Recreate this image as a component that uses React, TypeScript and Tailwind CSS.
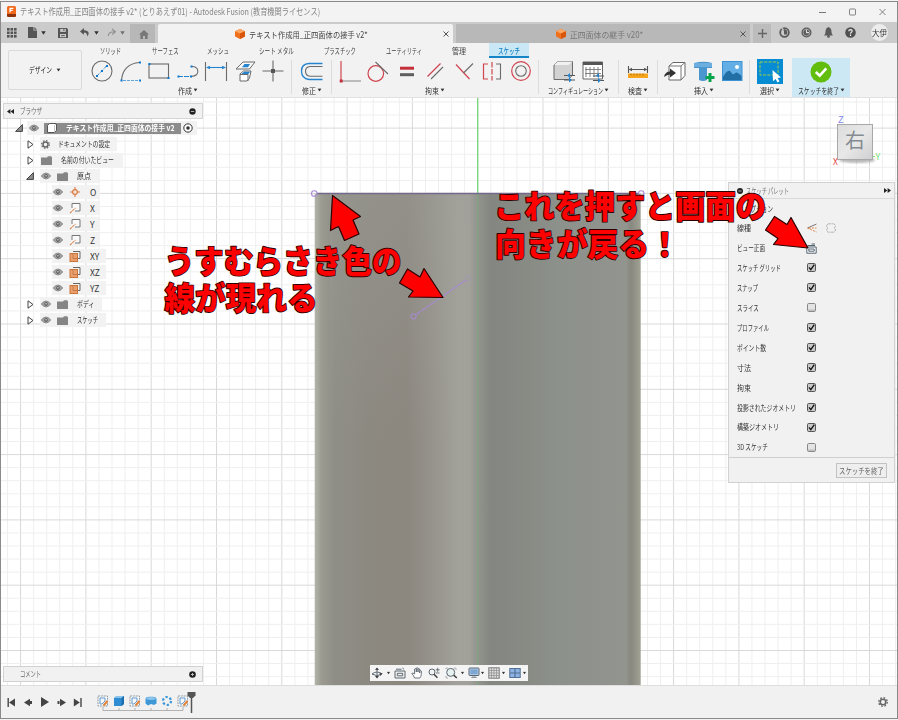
import { useLayoutEffect, useRef, useState, type ReactNode } from "react";

/* Text squeezed or stretched horizontally to a known width. */
function Fit({ w, className = "", children }: { w: number; className?: string; children: ReactNode }) {
  const ref = useRef<HTMLSpanElement>(null);
  const [scale, setScale] = useState(1);
  useLayoutEffect(() => {
    if (ref.current && ref.current.offsetWidth) {
      setScale(w / ref.current.offsetWidth);
    }
  }, [w]);
  return (
    <span className={"inline-block shrink-0 " + className} style={{ width: w }}>
      <span ref={ref} className="inline-block w-max origin-left whitespace-nowrap" style={{ transform: `scaleX(${scale})` }}>
        {children}
      </span>
    </span>
  );
}

function Caret({ className = "" }: { className?: string }) {
  return (
    <svg className={"shrink-0 " + className} width="5" height="4" viewBox="0 0 5 4">
      <path d="M0.3 0.3H4.7L2.5 3.8Z" fill="#333" />
    </svg>
  );
}

function Ico({ w = 24, h = 24, className = "", children }: { w?: number; h?: number; className?: string; children: ReactNode }) {
  return (
    <svg className={"block shrink-0 " + className} width={w} height={h} viewBox={`0 0 ${w} ${h}`} fill="none">
      {children}
    </svg>
  );
}

const B = "#2584d0";
const G = "#6b6b6b";
const R = "#cf4550";

/* ---------- top bars ---------- */

function TitleBar() {
  return (
    <div className="flex h-[22px] items-center bg-[#f3f3f3] pl-[7px] pt-px text-[9px] text-[#858585]">
      <Ico w={9} h={11}>
        <rect width="9" height="11" rx="1.5" fill="#f26a1b" />
        <path d="M0 8H9V9.5Q9 11 7.5 11H1.5Q0 11 0 9.5Z" fill="#8e3208" />
        <path d="M3 6.5V2.3H6.4M3 4.3H5.6" stroke="#fff" strokeWidth="1.2" />
      </Ico>
      <Fit w={300} className="ml-[4px]">テキスト作成用_正四面体の接手 v2* (とりあえず01) - Autodesk Fusion (教育機関ライセンス)</Fit>
      <div className="ml-auto flex items-center gap-[23px] pr-[12.5px]">
        <Ico w={7} h={8}><path d="M0 4.5H7" stroke="#777" /></Ico>
        <Ico w={7} h={8}><rect x=".5" y="1" width="6" height="6" rx=".8" stroke="#777" strokeWidth=".9" /></Ico>
        <Ico w={7} h={8}><path d="M.5 1L6.5 7M6.5 1L.5 7" stroke="#777" strokeWidth=".9" /></Ico>
      </div>
    </div>
  );
}

function OrangeCube() {
  return (
    <Ico w={10} h={10}>
      <path d="M5 0L10 2.2V7.6L5 10L0 7.6V2.2Z" fill="#f0701c" />
      <path d="M5 0L10 2.2L5 4.4L0 2.2Z" fill="#ffa764" />
      <path d="M5 4.4L10 2.2V7.6L5 10Z" fill="#d9550b" />
    </Ico>
  );
}

function TabClose() {
  return <Ico w={6} h={6}><path d="M.5 .5L5.5 5.5M5.5 .5L.5 5.5" stroke="#555" /></Ico>;
}

function TabBar() {
  return (
    <div className="flex h-[21px] bg-[#cbcbcb] text-[8.5px] text-[#444]">
      <div className="flex w-[130px] items-center pl-[7px]">
        <Ico w={10} h={10}>
          {[0, 3.5, 7].map((y) => [0, 3.5, 7].map((x) => <rect key={`${x}-${y}`} x={x} y={y} width="2.6" height="2.6" fill="#555" />))}
        </Ico>
        <Ico w={9} h={11} className="ml-[11px]">
          <path d="M0 0H5.5V3.5H9V11H0Z" fill="#555" /><path d="M6.3 0L9 2.7H6.3Z" fill="#555" />
        </Ico>
        <Caret className="ml-[4px]" />
        <Ico w={10} h={10} className="ml-[12px]">
          <path d="M0 0H8.8L10 1.2V10H0Z" fill="#555" />
          <rect x="2.2" y=".9" width="5.6" height="3" fill="#cbcbcb" /><rect x="2" y="6" width="6" height="3.2" fill="#cbcbcb" /><path d="M5.9 1v2M3.2 7.6H6.8" stroke="#555" />
        </Ico>
        <Ico w={9} h={9} className="ml-[12px]">
          <path d="M4 0L0 3.4L4 6.8V4.4Q7 4.2 7.4 8.6Q11 2.8 4 2.3Z" fill="#555" />
        </Ico>
        <Caret className="ml-[5px]" />
        <Ico w={9} h={9} className="ml-[8px]">
          <path d="M5 1L8.4 3.8L5 6.6M8.2 3.8Q1.5 3.4 1.2 8" stroke="#8d8d8d" strokeWidth="1.1" />
        </Ico>
        <Caret className="ml-[4px] opacity-60" />
      </div>
      <div className="mt-[2px] flex w-[25px] items-center justify-center bg-[#b7b7b7] pl-[2px] pt-px">
        <Ico w={10} h={9}><path d="M5 0L10 4.5H8.6V9H6V6H4V9H1.4V4.5H0Z" fill="#787878" /></Ico>
      </div>
      <div className="ml-[3px] mt-[2px] flex w-[295px] items-center rounded-t-[2px] bg-[#f2f2f2] pl-[77px] pt-px">
        <OrangeCube />
        <Fit w={119} className="ml-[4px]">テキスト作成用_正四面体の接手 v2*</Fit>
        <div className="ml-[75px]"><TabClose /></div>
      </div>
      <div className="ml-[3px] mt-[2px] flex w-[294px] items-center bg-[#b8b8b8] pl-[100px] pt-px text-[#777]">
        <OrangeCube />
        <Fit w={73} className="ml-[4px]">正四面体の継手 v20*</Fit>
        <div className="ml-[97px]"><TabClose /></div>
      </div>
      <div className="ml-[3px] mt-[2px] flex w-[18px] items-center justify-center bg-[#bcbcbc]">
        <Ico w={9} h={9}><path d="M4.5 0V9M0 4.5H9" stroke="#666" strokeWidth="1.4" /></Ico>
      </div>
      <div className="flex items-center gap-[11px] pl-[8px]">
        <Ico w={11} h={11}>
          <circle cx="5.5" cy="5.5" r="4.3" stroke="#5a5a5a" strokeWidth="1.8" />
          <path d="M5 4V7.4H8Q8.8 5 7.5 3.5Z" fill="#5a5a5a" /><path d="M4.5 2.5L7.5 4.2" stroke="#5a5a5a" strokeWidth="1.6" /><path d="M2.2 0L4.4 3.2" stroke="#cbcbcb" strokeWidth="1.2" />
        </Ico>
        <Ico w={11} h={11}><circle cx="5.5" cy="5.5" r="5" fill="#5a5a5a" /><circle cx="5.5" cy="5.5" r="3.4" stroke="#cbcbcb" strokeWidth=".6" /><path d="M5.5 2.5V5.6H8" stroke="#ddd" strokeWidth="1.1" /></Ico>
        <Ico w={11} h={11}><path d="M5.5 0Q8.6 1 8.5 5Q8.6 7 10 8.5H1Q2.4 7 2.5 5Q2.4 1 5.5 0Z" fill="#5a5a5a" /><circle cx="5.5" cy="9.4" r="1.4" fill="#5a5a5a" /></Ico>
        <Ico w={11} h={11}><circle cx="5.5" cy="5.5" r="5.3" fill="#505050" /><path d="M3.7 4.2Q3.8 2.6 5.5 2.6Q7.2 2.7 7.2 4Q7.2 4.9 6.2 5.4Q5.5 5.8 5.5 6.8M5.5 7.6V8.9" stroke="#eee" strokeWidth="1.2" /></Ico>
      </div>
      <div className="ml-[15px] mt-[2px] flex h-[17px] w-[17px] items-center justify-center rounded-full bg-[#ececec] text-[8px] text-[#333]">
        <Fit w={15}>大伊</Fit>
      </div>
    </div>
  );
}

function RibbonTabs() {
  const tab = "text-[8px] leading-[15px]";
  return (
    <div className="flex h-[15px] pl-[18px] text-[#444]">
      <Fit w={21} className={tab}>ソリッド</Fit>
      <Fit w={27} className={"ml-[31px] " + tab}>サーフェス</Fit>
      <Fit w={22} className={"ml-[28px] " + tab}>メッシュ</Fit>
      <Fit w={35} className={"ml-[30px] " + tab}>シート メタル</Fit>
      <Fit w={32} className={"ml-[30px] " + tab}>プラスチック</Fit>
      <Fit w={36} className={"ml-[30px] " + tab}>ユーティリティ</Fit>
      <Fit w={14} className={"ml-[30px] " + tab}>管理</Fit>
      <div className="ml-[23px] flex h-[15px] w-[40px] justify-center border-b-2 border-[#1585c8] bg-[#c9e7f5] text-[#0e7fc4]">
        <Fit w={22} className={tab + " font-medium"}>スケッチ</Fit>
      </div>
    </div>
  );
}

function Dot({ x, y }: { x: number; y: number }) {
  return <rect x={x - 1} y={y - 1} width="2" height="2" fill="#0d78cf" />;
}

function Group({ className, label, w, children }: { className: string; label: string; w: number; children: ReactNode }) {
  return (
    <div className={"flex shrink-0 flex-col items-center " + className}>
      <div className="flex h-[26px] items-center gap-[4.5px]">{children}</div>
      <div className="flex h-[13px] items-center text-[8px] text-[#333]">
        <Fit w={w} className="-mt-px leading-[13px]">{label}</Fit>
        <Caret className="-mt-px ml-px scale-90" />
      </div>
    </div>
  );
}

function Sep() {
  return <div className="mt-[2px] h-[34px] w-px shrink-0 bg-[#dcdcdc]" />;
}

function Ribbon() {
  return (
    <div className="flex h-[55px] border-b border-[#e2e2e2] bg-[#f2f2f2]">
      <div className="ml-[8px] mt-[7px] flex h-[40px] w-[74px] items-center justify-center gap-[4px] rounded-[2px] border border-[#dadada] text-[8px] text-[#222]">
        <Fit w={23}>デザイン</Fit><Caret className="scale-90" />
      </div>
      <div className="flex flex-1 flex-col">
        <RibbonTabs />
        <div className="flex h-[39px]">
          <Group className="w-[209px] pl-[2px]" label="作成" w={14}>
            <Ico><circle cx="12" cy="12" r="10" stroke={G} strokeWidth="1.1" /><path d="M6.5 17.5L17 6.5" stroke={B} strokeDasharray="4 1.5" /><Dot x={7} y={17} /><Dot x={12} y={12} /><Dot x={17} y={7} /></Ico>
            <Ico><path d="M2.5 21Q4 5 20.5 3.5" stroke={G} strokeWidth="1.1" /><path d="M4 21.5H20" stroke={B} strokeDasharray="3 1" opacity=".7" /><Dot x={2.5} y={21.5} /><Dot x={21} y={3.5} /><Dot x={21} y={21.5} /></Ico>
            <Ico><rect x="2" y="5" width="19.5" height="14" stroke={G} strokeWidth="1.1" /><Dot x={2.5} y={5} /><Dot x={21.5} y={19} /></Ico>
            <Ico><path d="M2 17.5H15" stroke={B} strokeDasharray="5 1" /><path d="M15 17.5Q22.5 17 21.8 11.5Q21 7 15 7.5" stroke={G} strokeWidth="1.1" /><Dot x={2.5} y={17.5} /><Dot x={15} y={17.5} /><Dot x={15.5} y={7.5} /></Ico>
            <Ico><path d="M1.5 3V22M22.5 3V22" stroke={G} strokeWidth="1.1" /><path d="M3 8.5H21" stroke={B} strokeWidth="1.1" /><path d="M2 8.5L6 6.8V10.2ZM22 8.5L18 6.8V10.2Z" fill={B} /></Ico>
            <Ico><path d="M10 3H22L16.5 10H3Z" stroke={G} fill="#f7f7f7" /><path d="M11.5 5H17L15 8.3H9Z" fill={B} /><path d="M7 15L10.5 12H18L16.5 19L14 22H7Z" stroke={G} fill="#fff" /><path d="M8.5 15L11 12.8H17.2L15 15.5Z" fill={B} /><path d="M7 15.5H15V22" stroke={G} /></Ico>
            <Ico><path d="M12 1.5V22.5M1.5 12H22.5" stroke={G} strokeWidth="1.1" /><rect x="10" y="10" width="4" height="4" fill="#555" /></Ico>
          </Group>
          <Sep />
          <Group className="w-[39px]" label="修正" w={14}>
            <Ico><path d="M22.5 4.5H9Q1.5 5 1.5 12Q1.5 19.5 9 20.5H22.5" stroke={B} strokeWidth="1.3" /><path d="M22.5 7.5H10Q5.5 8 5.5 12.3Q5.5 16.8 10 17.3H22.5" stroke={G} strokeWidth="1.1" /></Ico>
          </Group>
          <Sep />
          <Group className="w-[206px]" label="拘束" w={14}>
            <Ico><path d="M3 2V22" stroke={R} strokeWidth="1.2" /><path d="M4 22H23" stroke="#858585" /><rect x="1.7" y="20.5" width="3" height="3" fill="#c62f3d" /></Ico>
            <Ico><circle cx="9.8" cy="14.5" r="7.8" stroke={R} strokeWidth="1.2" /><path d="M9.5 3L22 15" stroke={G} strokeWidth="1.1" /></Ico>
            <Ico><path d="M5 9.2H19" stroke="#c5303c" strokeWidth="3" /><path d="M5 15.7H19" stroke="#5e5e5e" strokeWidth="3" /></Ico>
            <Ico><path d="M4.5 17.5L17.5 4.5" stroke={R} strokeWidth="1.2" /><path d="M8 20L20 8" stroke={G} strokeWidth="1.1" /></Ico>
            <Ico><path d="M4 5.5L17.5 20" stroke={R} strokeWidth="1.2" /><path d="M11.5 14L21 4.5" stroke={G} strokeWidth="1.1" /></Ico>
            <Ico><path d="M8 5H3.5V20H8" stroke={R} strokeWidth="1.2" /><path d="M16 5H20.5V20H16" stroke={G} strokeWidth="1.1" /><path d="M12 3V21.5" stroke={R} strokeWidth="1.2" strokeDasharray="5.5 1.5" /></Ico>
            <Ico><circle cx="12" cy="12" r="9.3" stroke={R} strokeWidth="1.2" /><circle cx="12" cy="12" r="5.3" stroke={G} strokeWidth="1.1" /></Ico>
          </Group>
          <Sep />
          <Group className="w-[79px]" label="コンフィギュレーション" w={55}>
            <Ico><path d="M2 6L6 2.5H20.5V16L16.5 20.5H2Z" fill="#d2d2d2" stroke="#6a6a6a" /><path d="M2 6L6 2.5H20.5L16.5 6Z" fill="#f1f1f1" /><path d="M12 16.5H23M12 21H23" stroke="#555" /><path d="M18 14L15 16.5L18 19ZM17 18.5L20 21L17 23.5Z" fill={B} /></Ico>
            <Ico><path d="M2 3H21.5V20H2Z" fill="#fff" stroke="#666" /><path d="M2 4.5H21.5" stroke="#555" strokeWidth="3" /><path d="M5 8V18M9 8V18M13 8V18M17 8V18M4 10.5H20M4 14.5H20" stroke="#777" strokeWidth=".9" /><path d="M12 17H23M12 21.5H23" stroke="#555" /><path d="M18 14L15 16.5L18 19ZM17 19L20 21.5L17 24Z" fill={B} /></Ico>
          </Group>
          <Sep />
          <Group className="w-[38px]" label="検査" w={14}>
            <Ico><path d="M2.5 7V14M21.5 7V14M4 10.5H20" stroke="#555" strokeWidth="1.1" /><path d="M2.5 10.5L6 8.8V12.2ZM21.5 10.5L18 8.8V12.2Z" fill="#555" /><rect x="2" y="14.5" width="20" height="4.5" fill="#f7a51c" /><path d="M5 14.5V16.5M8 14.5V16.5M11 14.5V16.5M14 14.5V16.5M17 14.5V16.5" stroke="#965d00" strokeWidth=".7" /></Ico>
          </Group>
          <Sep />
          <Group className="w-[91px]" label="挿入" w={14}>
            <Ico><path d="M6 7L10 3.5H22V16.5L18 21H6Z" fill="#fff" stroke="#666" /><path d="M6 7H18L22 3.5M18 7V21" stroke="#777" /><path d="M1 18Q2 12.5 7 12.5V9.5L13 14L7 18.5V15.5Q4 15.5 1 18Z" fill="#333" /></Ico>
            <Ico><path d="M2 4Q12 1.5 20 4V9H15V21Q11 23 7 21V9H2Z" fill="#4a96ce" /><path d="M2 4H20V8H2Z" fill="#6caede" /><path d="M18 14V23M13.5 18.5H22.5" stroke="#08a34b" strokeWidth="3" /></Ico>
            <Ico><rect x="2.5" y="2.5" width="19.5" height="19" fill="#62aee5" stroke="#3b92d4" /><path d="M3 18Q8 9 11 13Q13 17 15 14Q17 12 21.5 17V21H3Z" fill="#226fa6" /><circle cx="17" cy="8" r="2" fill="#fff" /></Ico>
          </Group>
          <Sep />
          <Group className="w-[40px]" label="選択" w={14}>
            <Ico w={26} h={26}><rect y="1" width="26" height="25" fill="#078bd2" /><rect x="3" y="4" width="18" height="13" stroke="#9ad04c" strokeDasharray="3 1.3" /><path d="M15.5 12L24 19.5L20.6 20L22.5 23.3L20.4 24.4L18.7 21L16 23.2Z" fill="#fff" /></Ico>
          </Group>
          <Group className="ml-[2px] w-[58px] bg-[#cbe8f4]" label="スケッチを終了" w={41}>
            <Ico w={22}><circle cx="11" cy="13" r="10.5" fill="#63bd0d" /><path d="M5.8 13L9.7 16.7L16.3 9.3" stroke="#fff" strokeWidth="2.6" /></Ico>
          </Group>
        </div>
      </div>
    </div>
  );
}

/* ---------- model view ---------- */

const STEP = 13.06;

function Model() {
  const lines: ReactNode[] = [];
  for (let i = -37; i <= 33; i++) {
    const x = 477.7 + i * STEP;
    lines.push(<path key={"v" + i} d={`M${x} 0V588`} stroke={i % 5 === 0 ? "#d9d9d9" : "#efefef"} />);
  }
  for (let i = -7; i <= 38; i++) {
    const y = 95.4 + i * STEP;
    lines.push(<path key={"h" + i} d={`M0 ${y}H898`} stroke={i % 5 === 0 ? "#d9d9d9" : "#efefef"} />);
  }
  return (
    <svg className="block" width="898" height="587" viewBox="0 0 898 587" fill="none">
      <defs>
        <linearGradient id="body" x1="314.7" x2="640.7" y1="0" y2="0" gradientUnits="userSpaceOnUse">
          <stop offset="0" stopColor="#b4b5aa" />
          <stop offset=".02" stopColor="#9b9b92" />
          <stop offset=".06" stopColor="#8f8e86" />
          <stop offset=".16" stopColor="#8c8981" />
          <stop offset=".28" stopColor="#8b877f" />
          <stop offset=".35" stopColor="#94918a" />
          <stop offset=".44" stopColor="#a2a19a" />
          <stop offset=".475" stopColor="#a1a19a" />
          <stop offset=".5" stopColor="#90948c" />
          <stop offset=".54" stopColor="#848781" />
          <stop offset=".65" stopColor="#878b84" />
          <stop offset=".75" stopColor="#8d918b" />
          <stop offset=".955" stopColor="#92948e" />
          <stop offset=".97" stopColor="#87887f" />
          <stop offset="1" stopColor="#a2a195" />
        </linearGradient>
        <linearGradient id="lift" x1="0" x2="0" y1="0" y2="1">
          <stop offset="0" stopColor="#a0a19b" stopOpacity=".35" />
          <stop offset=".5" stopColor="#a0a19b" stopOpacity="0" />
        </linearGradient>
      </defs>
      {lines}
      <path d="M477.7 0V96" stroke="#77d777" strokeWidth="1.3" />
      <rect x="314.7" y="95.5" width="326" height="493" fill="url(#body)" />
      <rect x="330" y="95.5" width="140" height="493" fill="url(#lift)" />
      <path d="M477.7 96V588" stroke="#7dac7d" strokeWidth="1.3" opacity=".65" />
      <path d="M317 95.6H638" stroke="#74688c" strokeWidth="1.5" />
      <g stroke="#a78ad4" strokeWidth="1.1">
        <circle cx="314.3" cy="95.5" r="2.8" />
        <circle cx="641.2" cy="95.5" r="2.8" />
        <circle cx="413.5" cy="218.3" r="2.6" opacity=".9" />
        <path d="M415.5 217L466 182" opacity=".85" />
        <circle cx="467.8" cy="180.5" r="2.4" opacity=".3" />
      </g>
    </svg>
  );
}

function Eye({ className = "" }: { className?: string }) {
  return (
    <Ico w={10} h={8} className={className}>
      <path d="M.2 4Q5-2 9.8 4Q5 10 .2 4Z" fill="#a5a5a5" stroke="#7d7d7d" strokeWidth=".8" /><circle cx="5" cy="4" r="1.9" fill="#666" /><circle cx="5" cy="3.7" r=".7" fill="#ddd" />
    </Ico>
  );
}
function Folder({ className = "" }: { className?: string }) {
  return <Ico w={11} h={9} className={className}><path d="M0 1.5H6L7 .3H10.2L11 1.5V9H0Z" fill="#858585" /></Ico>;
}
function Gear({ size = 10 }: { size?: number }) {
  return (
    <svg className="shrink-0" width={size} height={size} viewBox="0 0 10 10" fill="none">
      <circle cx="5" cy="5" r="2.8" stroke="#666" strokeWidth="1.6" />
      <circle cx="5" cy="5" r="4.3" stroke="#666" strokeWidth="1.3" strokeDasharray="1.69 1.69" />
    </svg>
  );
}
function Closed() {
  return <Ico w={7} h={9}><path d="M1 .8L6 4.5L1 8.2Z" stroke="#444" fill="#fff" /></Ico>;
}
function Open() {
  return <Ico w={8} h={8}><path d="M7.4 .6V7.4H.6Z" fill="#8d8d8d" stroke="#333" strokeWidth=".9" /></Ico>;
}

function Leaf({ kind, name }: { kind: "point" | "axis" | "plane"; name: string }) {
  return (
    <div className="flex h-[16px] items-center pl-[49px]">
      <div className={"flex h-[14px] items-center bg-[#f2f2f2] pl-[1px] " + (name.length > 1 ? "w-[54px]" : "w-[48px]")}>
        <Eye />
        <Ico w={12} h={12} className="ml-[6px]">
          {kind === "point" && <><path d="M6 1V11M1 6H11" stroke="#d87c42" strokeWidth="1.1" /><circle cx="6" cy="6" r="2.4" fill="#f7e4d8" stroke="#d87c42" strokeWidth="1.2" /></>}
          {kind === "axis" && <><path d="M3 6V1.5H11V9H6" stroke="#777" fill="#fafafa" /><path d="M1 11L6.5 6" stroke="#dd8850" strokeWidth="1.1" strokeDasharray="2.5 .7" /></>}
          {kind === "plane" && <><path d="M4 1.5H11V8.5H9" stroke="#666" /><rect x="1" y="3.5" width="7.5" height="8" fill="#e9a06f" stroke="#cd7537" /><path d="M4 3.5V8.5H8.5" stroke="#c97b45" /></>}
        </Ico>
        <span className="ml-[9px] text-[8.5px]">{name}</span>
      </div>
    </div>
  );
}

function Browser() {
  return (
    <div className="absolute left-[3px] top-[5px] w-[200px] text-[8px] text-[#333]">
      <div className="flex h-[16px] items-center border border-[#d5d5d5] bg-[#f1f1f1] pl-[3px] text-[#666]">
        <Ico w={7} h={5}><path d="M3.4 0V5L0 2.5ZM7 0V5L3.6 2.5Z" fill="#222" /></Ico>
        <Fit w={22} className="ml-[6px]">ブラウザ</Fit>
        <Ico w={7} h={7} className="ml-auto mr-[6px]"><circle cx="3.5" cy="3.5" r="3.2" fill="#222" /><path d="M1.8 3.5H5.2" stroke="#aaa" /></Ico>
      </div>
      <div className="mt-px flex h-[16px] items-center pl-[12px]">
        <Open />
        <div className="ml-[4px] flex h-[14px] items-center bg-[#f2f2f2] pl-[2px] pr-[4px]">
          <Eye />
          <div className="ml-[5px] flex h-[11px] w-[137px] items-center bg-[#8c8c8c] pl-[3px] text-white">
            <Ico w={10} h={10}><path d="M.5 2.5L2.5 .5H9.5V7.5L7.5 9.5H.5Z" fill="#fff" stroke="#555" /><path d="M7.5 9.5V2.5L9.5 .5" stroke="#bbb" strokeWidth=".8" /></Ico>
            <Fit w={108} className="ml-[9px] text-[7.5px] font-bold">テキスト作成用_正四面体の接手 v2</Fit>
          </div>
          <Ico w={10} h={10} className="ml-[2px]"><circle cx="5" cy="5" r="4.2" stroke="#333" fill="#fff" /><circle cx="5" cy="5" r="1.8" fill="#333" /></Ico>
        </div>
      </div>
      <div className="flex h-[16px] items-center pl-[24px]">
        <Closed />
        <div className="ml-[6px] flex h-[14px] w-[77px] items-center bg-[#f2f2f2] pl-[1px]"><Gear size={9} /><Fit w={52} className="ml-[8px]">ドキュメントの設定</Fit></div>
      </div>
      <div className="flex h-[16px] items-center pl-[24px]">
        <Closed />
        <div className="ml-[6px] flex h-[14px] w-[83px] items-center bg-[#f2f2f2] pl-[1px]"><Folder /><Fit w={53} className="ml-[9px]">名前の付いたビュー</Fit></div>
      </div>
      <div className="flex h-[16px] items-center pl-[23px]">
        <Open />
        <div className="ml-[6px] flex h-[14px] w-[60px] items-center bg-[#f2f2f2] pl-[1px]"><Eye /><Folder className="ml-[6px]" /><Fit w={14} className="ml-[9px]">原点</Fit></div>
      </div>
      <Leaf kind="point" name="O" />
      <Leaf kind="axis" name="X" />
      <Leaf kind="axis" name="Y" />
      <Leaf kind="axis" name="Z" />
      <Leaf kind="plane" name="XY" />
      <Leaf kind="plane" name="XZ" />
      <Leaf kind="plane" name="YZ" />
      <div className="flex h-[16px] items-center pl-[24px]">
        <Closed />
        <div className="ml-[6px] flex h-[14px] w-[62px] items-center bg-[#f2f2f2] pl-[1px]"><Eye /><Folder className="ml-[6px]" /><Fit w={17} className="ml-[9px]">ボディ</Fit></div>
      </div>
      <div className="flex h-[16px] items-center pl-[24px]">
        <Closed />
        <div className="ml-[6px] flex h-[14px] w-[66px] items-center bg-[#f2f2f2] pl-[1px]"><Eye /><Folder className="ml-[6px]" /><Fit w={21} className="ml-[9px]">スケッチ</Fit></div>
      </div>
    </div>
  );
}

function ViewCube() {
  return (
    <svg className="absolute left-[830px] top-[12px]" width="56" height="60" viewBox="0 0 56 60" fill="none">
      <defs>
        <linearGradient id="face" x1="0" x2="1" y1="0" y2="1"><stop offset="0" stopColor="#dcdcdd" /><stop offset=".5" stopColor="#e8e8e8" /><stop offset="1" stopColor="#cfcfd1" /></linearGradient>
        <filter id="soft"><feGaussianBlur stdDeviation="1.3" /></filter>
      </defs>
      <ellipse cx="27" cy="50" rx="18" ry="3" fill="#888" opacity=".6" filter="url(#soft)" />
      <rect x="7.5" y="14.5" width="35" height="35" fill="url(#face)" stroke="#a8a8a8" />
      <text x="25" y="38" textAnchor="middle" fontSize="20" fill="#858b92">右</text>
      <text x="8" y="12.5" fontSize="9.5" fill="#8585ee">Z</text>
      <text x="3" y="54.5" fontSize="8.5" fill="#e34444">X</text>
      <text x="45.5" y="50" fontSize="9" fill="#75e275">Y</text>
      <path d="M43 46.5H45" stroke="#75e275" />
    </svg>
  );
}

function Check({ on }: { on: boolean }) {
  return (
    <Ico w={9} h={9}>
      <rect x=".5" y=".5" width="8" height="8" rx="1.2" fill={on ? "#c9c9c9" : "#e3e3e3"} stroke={on ? "#555" : "#888"} />
      {!on && <path d="M1 7.2H8" stroke="#bbb" strokeWidth="1.4" />}
      {on && <path d="M2 4.4L3.8 6.6L7.3 1.6" stroke="#111" strokeWidth="1.3" />}
    </Ico>
  );
}

const options: { label: string; w: number; on: boolean }[] = [
  { label: "スケッチ グリッド", w: 44, on: true },
  { label: "スナップ", w: 21, on: true },
  { label: "スライス", w: 22, on: false },
  { label: "プロファイル", w: 32, on: true },
  { label: "ポイント数", w: 29, on: true },
  { label: "寸法", w: 14, on: true },
  { label: "拘束", w: 14, on: true },
  { label: "投影されたジオメトリ", w: 59, on: true },
  { label: "構築ジオメトリ", w: 42, on: true },
  { label: "3D スケッチ", w: 31, on: false },
];

function Palette() {
  return (
    <div className="absolute left-[728px] top-[84px] h-[301px] w-[167px] border border-[#d2d2d2] bg-[#f1f1f1] text-[8px] text-[#333]">
      <div className="flex h-[16px] items-center border-b border-[#dadada] pl-[8px] text-[#777]">
        <Ico w={6} h={6}><circle cx="3" cy="3" r="3" fill="#222" /><path d="M1.4 3H4.6" stroke="#aaa" /></Ico>
        <Fit w={43} className="ml-[3px]">スケッチ パレット</Fit>
        <Ico w={7} h={5} className="ml-auto mr-[3px]"><path d="M0 0V5L3.4 2.5ZM3.6 0V5L7 2.5Z" fill="#222" /></Ico>
      </div>
      <div className="flex h-[19px] items-center pl-[8px]">
        <Ico w={6} h={6}><path d="M0 1H6L3 5Z" fill="#444" /></Ico>
        <Fit w={28} className="ml-[2px]">オプション</Fit>
      </div>
      <div className="flex h-[20px] items-center pl-[8px]">
        <div className="flex w-[69px]"><Fit w={14}>線種</Fit></div>
        <Ico w={12} h={10}><path d="M10.5 1L1.5 5" stroke="#777" /><path d="M1.5 5L10.5 9M3 5H10.5" stroke="#df8850" strokeDasharray="2 1" /></Ico>
        <Ico w={10} h={10} className="ml-[8px]"><path d="M2 .8H8L9.3 2.3V4L8 5L9.3 6V8L8 9.2H2L.8 8V6L2 5L.8 4V2.3Z" stroke="#b5b5b5" strokeDasharray="3.5 .7" /></Ico>
      </div>
      <div className="flex h-[20px] items-center pl-[8px]">
        <div className="flex w-[69px]"><Fit w={28}>ビュー正面</Fit></div>
        <Ico w={11} h={11}><path d="M.8 4H10.2V10.2H.8Z" fill="#fff" stroke="#546572" /><path d="M2.8 6H8.2V8.2H2.8Z" stroke="#546572" /><path d="M1.5 2.5H9M5.5 1H9" stroke="#546572" /></Ico>
      </div>
      {options.map((o) => (
        <div key={o.label} className="flex h-[19.95px] items-center pl-[8px]">
          <div className="flex w-[70px]"><Fit w={o.w}>{o.label}</Fit></div>
          <Check on={o.on} />
        </div>
      ))}
      <div className="flex h-[25px] items-center justify-end border-t border-[#cfcfcf] pr-[7px]">
        <div className="flex h-[15px] w-[51px] items-center justify-center border border-[#c2c2c2] bg-[#eee] text-[8.5px] text-[#666]">
          <Fit w={45}>スケッチを終了</Fit>
        </div>
      </div>
    </div>
  );
}

function NavBar() {
  const s = "#5c6670";
  return (
    <div className="absolute left-[370px] top-[567px] flex h-[16px] w-[158px] items-center bg-[#f4f4f4] pl-[1px]">
      <Ico w={12} h={12}><path d="M6 1V11M1 7Q6 3 11 7M1 7Q6 10 10 7.5" stroke={s} /><path d="M4 3L6 .5L8 3ZM8.5 5.5L11.8 6.5L9 9ZM4 9L6 11.5L8 9Z" fill="#444" /></Ico>
      <Caret className="ml-[3px] scale-75" />
      <Ico w={12} h={12} className="ml-[3px]"><path d="M1 4H11V11H1Z" stroke={s} /><path d="M3.3 6.3H8.7V8.8H3.3Z" stroke={s} /><path d="M2 2.2H7.5M8.5 1L10 2.2" stroke={s} /></Ico>
      <Ico w={12} h={12} className="ml-[5px]"><path d="M3.5 11Q3 8.8.8 6.5Q1.8 5.2 3.6 7V2Q4.5 1 5.3 2V5V1.2Q6.2.2 7 1.2V5V2Q7.9 1 8.7 2V6V3.8Q9.8 3 10.3 4V7.5Q10 9.5 8.8 11Z" fill="#fff" stroke={s} strokeWidth=".9" /></Ico>
      <Ico w={12} h={12} className="ml-[5px]"><circle cx="4" cy="5" r="3" stroke={s} /><path d="M6 7.2L9.4 10.7" stroke="#444" strokeWidth="1.6" /><path d="M7.7 2.8H11.7M9.7 .8V4.8M8 6H11.5" stroke={s} strokeWidth=".9" /></Ico>
      <Ico w={13} h={12} className="ml-[5px]"><path d="M1 2V1H3M9 1H11V3M1 9V11H3" stroke="#999" strokeDasharray="1.5 .8" /><circle cx="5.7" cy="5.4" r="4" stroke={s} fill="#e8f2f2" /><path d="M8.7 8.2L11.8 11" stroke="#444" strokeWidth="1.6" /></Ico>
      <Caret className="ml-[2px] scale-75" />
      <Ico w={12} h={12} className="ml-[3px]"><rect x="1" y="1" width="10" height="7.5" rx=".6" stroke={s} fill="#bed5ee" /><rect x="2.3" y="2.3" width="7.4" height="5" fill="#7da6d4" /><path d="M4 9.5H8L9 11H3Z" fill="#8a929a" /></Ico>
      <Caret className="scale-75" />
      <Ico w={12} h={12} className="ml-[3px]"><rect x=".8" y=".8" width="10.4" height="10.4" fill="#dedede" stroke="#777" /><path d="M3.5 1V11M6 1V11M8.5 1V11M1 3.5H11M1 6H11M1 8.5H11" stroke="#8d8d8d" strokeWidth=".7" /></Ico>
      <Caret className="ml-px scale-75" />
      <Ico w={12} h={12} className="ml-[3px]"><rect x=".8" y="1.5" width="10.4" height="9" fill="#8cb3e3" stroke="#526f94" /><path d="M6 1.5V10.5M1 6H11" stroke="#526f94" strokeWidth="1.2" /></Ico>
      <Caret className="ml-px scale-75" />
    </div>
  );
}

function CommentBar() {
  return (
    <div className="absolute left-[3px] top-[568px] flex h-[16px] w-[200px] items-center border border-[#d2d2d2] bg-[#f1f1f1] pl-[16px] text-[8px] text-[#666]">
      <Fit w={21}>コメント</Fit>
      <Ico w={7} h={7} className="ml-auto mr-[6px]"><circle cx="3.5" cy="3.5" r="3.3" fill="#222" /><path d="M2 3.5H5M3.5 2V5" stroke="#bbb" /></Ico>
    </div>
  );
}

/* Red callouts drawn over the model view. */
function Callouts() {
  const lines: [string, number, number, number][] = [
    ["うすむらさき色の", 164.5, 272.5, 237],
    ["線が現れる", 164.5, 310, 153],
    ["これを押すと画面の", 494, 218, 272],
    ["向きが戻る！", 495, 255.5, 185],
  ];
  return (
    <svg className="pointer-events-none absolute left-0 top-0" width="898" height="720" viewBox="0 0 898 720">
      <g fill="#fe0000" stroke="#2a0000" strokeWidth="1.2" strokeLinejoin="round">
        <path d="M332.5 195.5L360.5 216.5L353 220L359 234L344.5 240.5L338.5 226.5L330.5 230.5Z" />
        <path d="M407.5 269L420 277L424 268.5L443 297.5L408.5 297L413 291L399.5 283Z" />
        <path d="M774.5 216.5L787 224.5L791 217.5L808 248L773.5 244.5L778 238.5L765.5 230Z" />
      </g>
      {lines.map(([t, x, y, w]) => (
        <text key={t} x={x} y={y} textLength={w} lengthAdjust="spacingAndGlyphs" fontSize="31.5" fontWeight="900" fill="#fe0000" stroke="#2a0000" strokeWidth="1.8" strokeLinejoin="round" className="[paint-order:stroke]">
          {t}
        </text>
      ))}
    </svg>
  );
}

/* ---------- timeline ---------- */

function Timeline() {
  const sketch = (
    <Ico w={12} h={12}>
      <rect x="1" y="1" width="9.5" height="10" fill="#fafafa" stroke="#8d9aa5" strokeDasharray="2 .8" />
      <path d="M3 3H8V6L5 9H3Z" stroke="#4c8ec9" strokeWidth=".9" />
      <path d="M6.5 10.5L10.5 6" stroke="#e58130" strokeWidth="2" />
    </Ico>
  );
  return (
    <div className="flex h-[35px] border-t border-[#dedede] bg-[#f1f1f1]">
      <div className="flex h-[32px] items-center gap-[7.5px] pl-[7px]">
        <Ico w={9} h={9}><path d="M1.2 0V9" stroke="#444" strokeWidth="1.4" /><path d="M8 .5V8.5L2 4.5Z" fill="#444" /></Ico>
        <Ico w={9} h={9}><path d="M6 .7V8.3L0 4.5Z" fill="#444" /><path d="M7 3V6" stroke="#444" strokeWidth="2" /></Ico>
        <Ico w={9} h={10}><path d="M1 0V10L9 5Z" fill="#444" /></Ico>
        <Ico w={9} h={9}><path d="M3 .7V8.3L9 4.5Z" fill="#444" /><path d="M1.5 3V6" stroke="#444" strokeWidth="2" /></Ico>
        <Ico w={9} h={9}><path d="M8 0V9" stroke="#444" strokeWidth="1.4" /><path d="M.8 .5V8.5L6.8 4.5Z" fill="#444" /></Ico>
      </div>
      <div className="ml-[15px] mt-[9px] flex flex-col">
        <div className="flex gap-[4px]">
          {sketch}
          <Ico w={12} h={12}><path d="M1 3L3.5 1H11V9L8.5 11H1Z" fill="#2f8ed3" /><path d="M1 3L3.5 1H11L8.5 3Z" fill="#8ac4ec" /><path d="M8.5 3L11 1V9L8.5 11Z" fill="#1b6fae" /></Ico>
          {sketch}
          <Ico w={12} h={12}><path d="M.5 4Q1 1 6 1.8Q11 1 11.5 4V8.5L9 10L6 9L3 10.5L.5 8.5Z" fill="#3e98d8" /><path d="M.8 4Q6 6 11.3 4Q10 1.5 6 2Q2 1.5.8 4Z" fill="#8ac4ec" /></Ico>
          <Ico w={12} h={12}><circle cx="6" cy="6" r="4" stroke="#3a96d8" strokeWidth="2.2" strokeDasharray="2.3 1.89" /></Ico>
          {sketch}
        </div>
        <Ico w={92} h={5}><path d="M6 0V3.5H86V0M22 1V3.5M38 1V3.5M54 1V3.5M70 1V3.5" stroke="#aaa" strokeWidth=".9" /></Ico>
      </div>
      <Ico w={9} h={23} className="-ml-[2px] mt-[5px]"><path d="M.5 1H8.5V4.5L6 7H3L.5 4.5Z" fill="#555" /><path d="M4.5 5V22" stroke="#555" strokeWidth="1.5" /></Ico>
      <div className="ml-auto mr-[10px] flex h-[32px] items-center"><Gear size={10} /></div>
    </div>
  );
}

export default function App() {
  return (
    <div className="relative flex h-[720px] w-[898px] flex-col overflow-hidden bg-white font-['Noto_Sans_CJK_JP','Noto_Sans',sans-serif]">
      <TitleBar />
      <TabBar />
      <Ribbon />
      <div className="relative h-[587px] overflow-hidden">
        <Model />
        <Browser />
        <ViewCube />
        <Palette />
        <NavBar />
        <CommentBar />
      </div>
      <Timeline />
      <Callouts />
      <div className="pointer-events-none absolute inset-x-0 bottom-[1px] top-[1px] border border-[#8a8a8a]" />
    </div>
  );
}
